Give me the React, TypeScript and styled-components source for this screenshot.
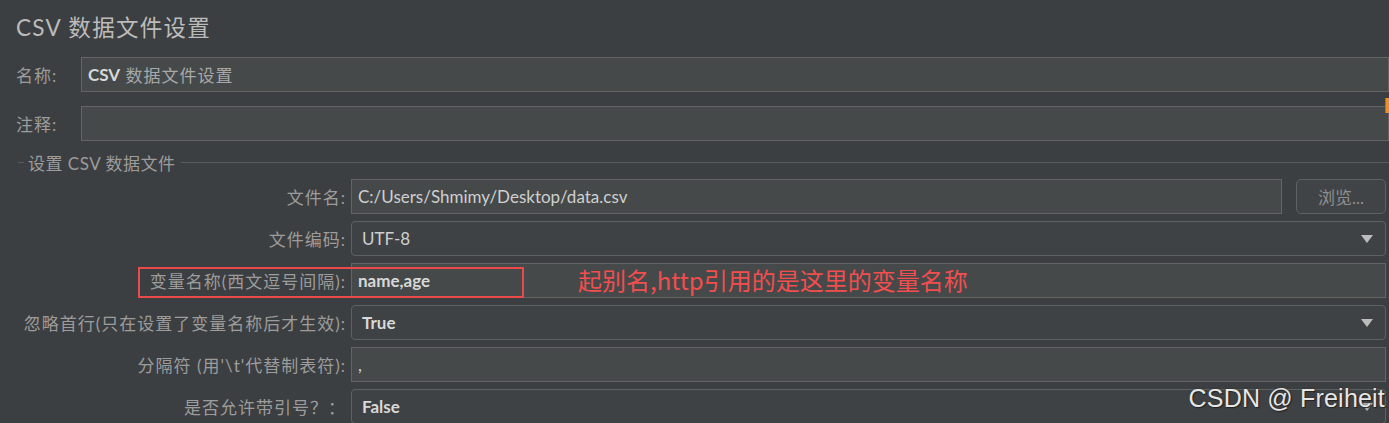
import React from 'react';
import styled, { createGlobalStyle } from 'styled-components';

const GlobalStyle = createGlobalStyle`
  html, body {
    margin: 0;
    padding: 0;
    background: #3c3f41;
    overflow: hidden;
  }
`;

const cjk = `Lato, "Noto Sans CJK SC", "Noto Sans", sans-serif`;

const Page = styled.div`
  position: relative;
  width: 1389px;
  height: 423px;
  box-sizing: border-box;
  padding: 13px 3px 0 16px;
  background: #3c3f41;
  font-family: ${cjk};
  overflow: hidden;
`;

const Title = styled.h1`
  margin: 0;
  font-size: 22.5px;
  font-weight: normal;
  line-height: 30px;
  letter-spacing: 1.3px;
  color: #bbbbbb;
`;

const TopRow = styled.div<{ $top: number }>`
  display: flex;
  align-items: center;
  margin-top: ${(p) => p.$top}px;
  margin-right: -3px;
`;

const TopLabel = styled.span`
  width: 65px;
  flex: none;
  font-size: 17px;
  letter-spacing: 1px;
  color: #9c9c9c;
`;

const TextField = styled.div<{ $pad?: number }>`
  flex: 1;
  height: 35px;
  box-sizing: border-box;
  display: flex;
  align-items: center;
  padding-left: ${(p) => p.$pad ?? 6}px;
  background: #45494a;
  border: 1px solid #646464;
  font-size: 17px;
  color: #d4d4d4;
  white-space: nowrap;
  overflow: hidden;
`;

const Value = styled.span<{ $strong?: boolean }>`
  font-weight: ${(p) => (p.$strong ? 700 : 400)};
  color: ${(p) => (p.$strong ? '#d8d8d8' : '#cfcfcf')};
`;

const Dim = styled.span`
  color: #a8a8a8;
  letter-spacing: 1px;
`;

const SectionHead = styled.div`
  display: flex;
  align-items: center;
  gap: 4px;
  margin-top: 10px;
  margin-right: -3px;
  height: 22px;
  font-size: 17px;
  color: #9c9c9c;
  letter-spacing: 0.5px;
`;

const HeadLine = styled.span<{ $grow?: boolean }>`
  height: 1px;
  background: #595c5e;
  width: 6px;
  margin-left: 2px;
  flex: ${(p) => (p.$grow ? 1 : 'none')};
`;

const Form = styled.div`
  display: flex;
  flex-direction: column;
  gap: 7px;
  margin-top: 6px;
`;

const FormRow = styled.div`
  position: relative;
  display: flex;
  align-items: center;
  gap: 5px;
`;

const FormLabel = styled.span`
  width: 330px;
  flex: none;
  text-align: right;
  font-size: 17px;
  letter-spacing: 1px;
  color: #9c9c9c;
  white-space: nowrap;
`;

const Combo = styled.div`
  flex: 1;
  height: 35px;
  box-sizing: border-box;
  display: flex;
  align-items: center;
  justify-content: space-between;
  padding: 0 12px 0 10px;
  background: #3f4244;
  border: 1px solid #5e6162;
  border-radius: 4px;
  font-size: 17px;
`;

const Arrow = styled.span`
  width: 0;
  height: 0;
  border-left: 6px solid transparent;
  border-right: 6px solid transparent;
  border-top: 8px solid #bcbcbc;
`;

const Browse = styled.button`
  width: 90px;
  height: 35px;
  margin-left: 9px;
  flex: none;
  background: #414446;
  border: 1px solid #5e6162;
  border-radius: 5px;
  font-family: ${cjk};
  font-size: 17px;
  color: #8e8e8e;
`;

const Highlight = styled.div`
  position: absolute;
  left: 122px;
  top: 4px;
  width: 386px;
  height: 31px;
  box-sizing: border-box;
  border: 2px solid #ec4a4a;
  pointer-events: none;
`;

const Note = styled.span`
  position: absolute;
  left: 562px;
  top: 2px;
  font-family: "Noto Sans CJK SC", sans-serif;
  font-size: 24px;
  line-height: 30px;
  color: #f24e4e;
  white-space: nowrap;
`;

const Watermark = styled.div`
  position: absolute;
  right: 4px;
  bottom: 10px;
  font-family: "Liberation Sans", Arial, sans-serif;
  font-size: 25px;
  color: #e6e6e6;
  text-shadow: 0 0 2px #2a2a2a, 1px 1px 1px #222;
  letter-spacing: 0.2px;
`;

const ScrollEdge = styled.div`
  position: absolute;
  right: 0;
  top: 98px;
  width: 3px;
  height: 15px;
  background: #f0901e;
  border-left: 1px solid #5a7ad8;
`;

export default function App() {
  return (
    <>
      <GlobalStyle />
      <Page>
        <Title>CSV 数据文件设置</Title>
        <TopRow $top={14}>
          <TopLabel>名称:</TopLabel>
          <TextField $pad={6}>
            <Value $strong>CSV</Value>
            <Dim>&nbsp;数据文件设置</Dim>
          </TextField>
        </TopRow>
        <TopRow $top={14}>
          <TopLabel>注释:</TopLabel>
          <TextField />
        </TopRow>
        <SectionHead>
          <HeadLine />
          <span>设置 CSV 数据文件</span>
          <HeadLine $grow />
        </SectionHead>
        <Form>
          <FormRow>
            <FormLabel>文件名:</FormLabel>
            <TextField>
              <Value>C:/Users/Shmimy/Desktop/data.csv</Value>
            </TextField>
            <Browse type="button">浏览...</Browse>
          </FormRow>
          <FormRow>
            <FormLabel>文件编码:</FormLabel>
            <Combo>
              <Value>UTF-8</Value>
              <Arrow />
            </Combo>
          </FormRow>
          <FormRow>
            <FormLabel>变量名称(西文逗号间隔):</FormLabel>
            <TextField>
              <Value $strong>name,age</Value>
            </TextField>
            <Highlight />
            <Note>起别名,http引用的是这里的变量名称</Note>
          </FormRow>
          <FormRow>
            <FormLabel>忽略首行(只在设置了变量名称后才生效):</FormLabel>
            <Combo>
              <Value $strong>True</Value>
              <Arrow />
            </Combo>
          </FormRow>
          <FormRow>
            <FormLabel>分隔符 (用'\t'代替制表符):</FormLabel>
            <TextField>
              <Value>,</Value>
            </TextField>
          </FormRow>
          <FormRow>
            <FormLabel>是否允许带引号？：</FormLabel>
            <Combo>
              <Value $strong>False</Value>
              <Arrow />
            </Combo>
          </FormRow>
        </Form>
        <ScrollEdge />
        <Watermark>CSDN @ Freiheit</Watermark>
      </Page>
    </>
  );
}
